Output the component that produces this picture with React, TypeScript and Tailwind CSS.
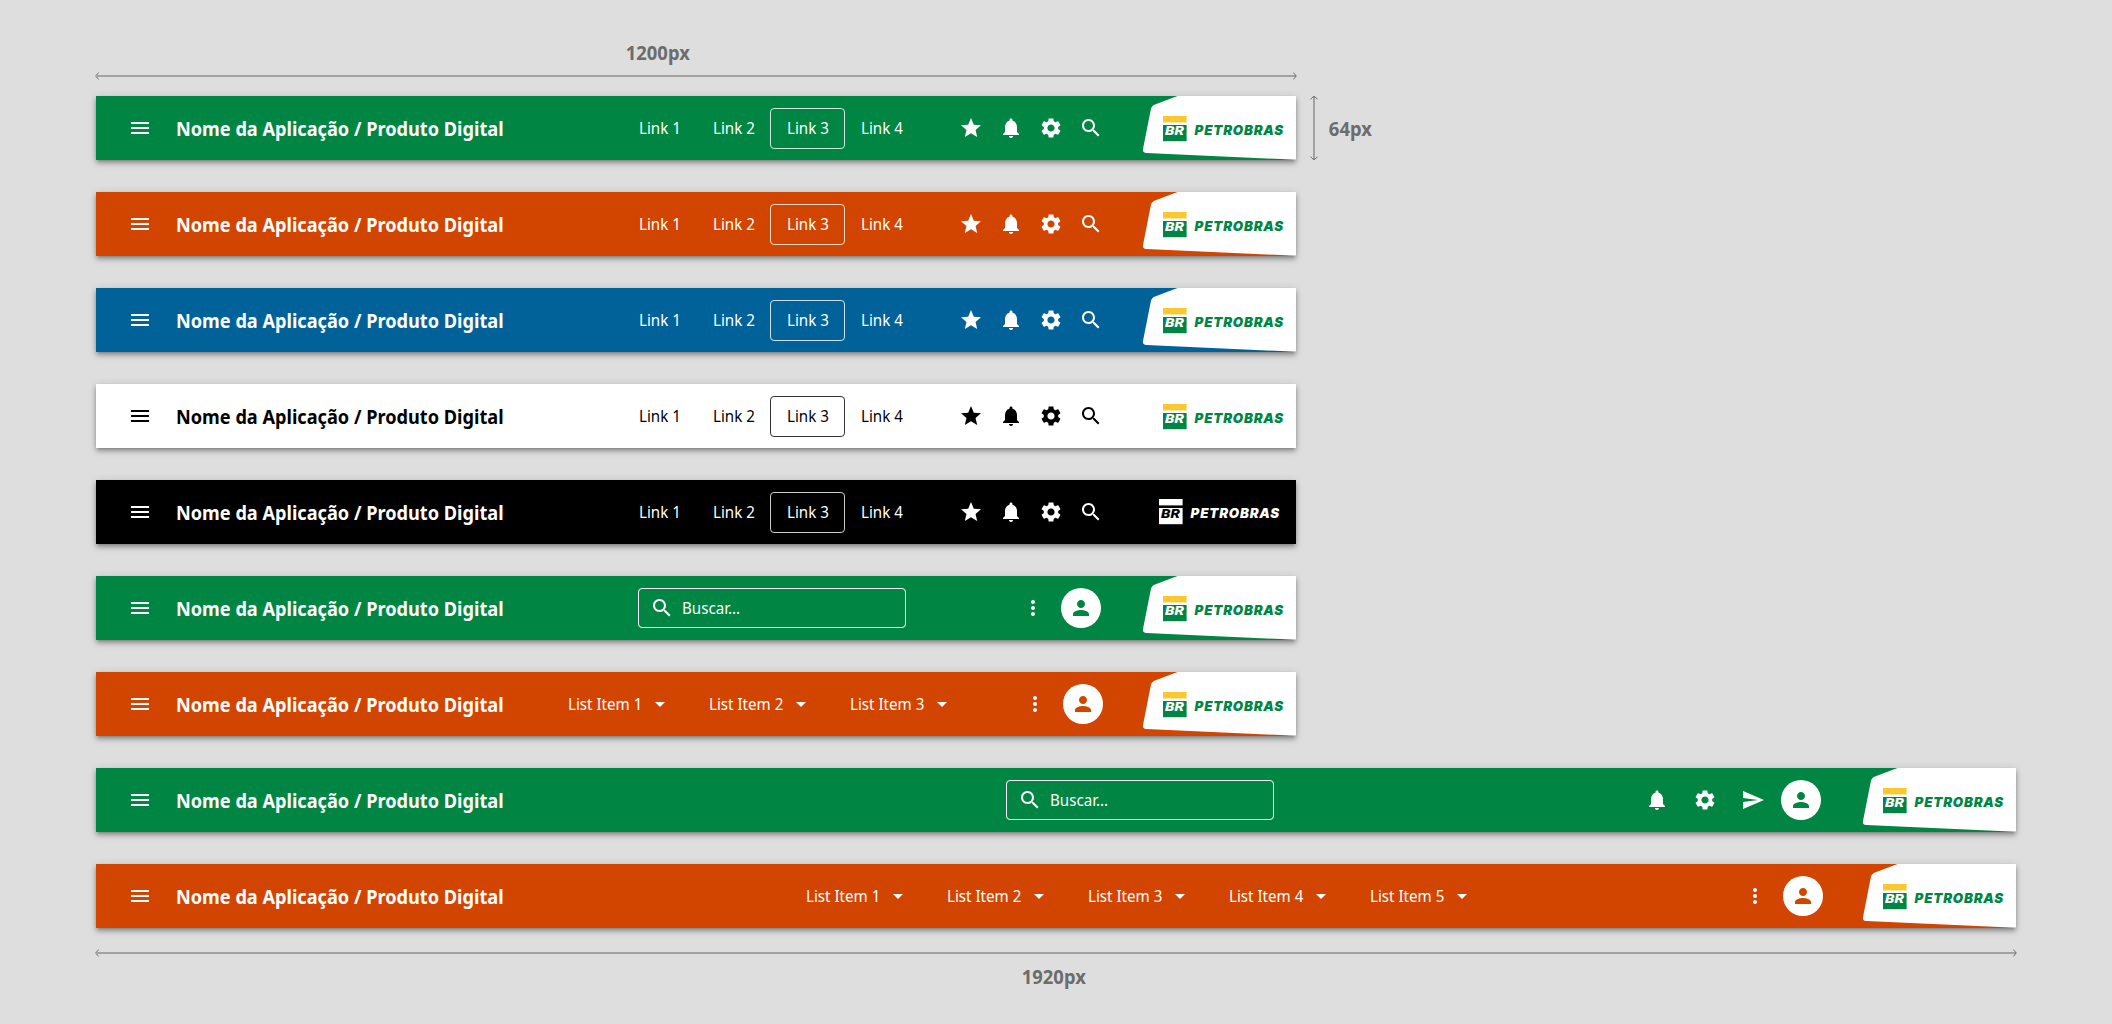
import type { ReactNode } from "react";

const ICONS = {
  menu: "M3 18h18v-2H3v2zm0-5h18v-2H3v2zm0-7v2h18V6H3z",
  star: "M12 17.27L18.18 21l-1.64-7.03L22 9.24l-7.19-.61L12 2 9.19 8.63 2 9.24l5.46 4.73L5.82 21z",
  bell: "M12 22c1.1 0 2-.9 2-2h-4c0 1.1.89 2 2 2zm6-6v-5c0-3.07-1.64-5.64-4.5-6.32V4c0-.83-.67-1.5-1.5-1.5s-1.5.67-1.5 1.5v.68C7.63 5.36 6 7.92 6 11v5l-2 2v1h16v-1l-2-2z",
  gear: "M19.14 12.94c.04-.3.06-.61.06-.94 0-.32-.02-.64-.07-.94l2.03-1.58c.18-.14.23-.41.12-.61l-1.92-3.32c-.12-.22-.37-.29-.59-.22l-2.39.96c-.5-.38-1.03-.7-1.62-.94l-.36-2.54c-.04-.24-.24-.41-.48-.41h-3.84c-.24 0-.43.17-.47.41l-.36 2.54c-.59.24-1.13.57-1.62.94l-2.39-.96c-.22-.08-.47 0-.59.22L2.74 8.87c-.12.21-.08.47.12.61l2.03 1.58c-.05.3-.09.63-.09.94s.02.64.07.94l-2.03 1.58c-.18.14-.23.41-.12.61l1.92 3.32c.12.22.37.29.59.22l2.39-.96c.5.38 1.03.7 1.62.94l.36 2.54c.05.24.24.41.48.41h3.84c.24 0 .44-.17.47-.41l.36-2.54c.59-.24 1.13-.56 1.62-.94l2.39.96c.22.08.47 0 .59-.22l1.92-3.32c.12-.22.07-.47-.12-.61l-2.01-1.58zM12 15.6c-1.98 0-3.6-1.62-3.6-3.6s1.62-3.6 3.6-3.6 3.6 1.62 3.6 3.6-1.62 3.6-3.6 3.6z",
  search: "M15.5 14h-.79l-.28-.27C15.41 12.59 16 11.11 16 9.5 16 5.91 13.09 3 9.5 3S3 5.91 3 9.5 5.91 16 9.5 16c1.61 0 3.09-.59 4.23-1.57l.27.28v.79l5 4.99L20.49 19l-4.99-5zm-6 0C7.01 14 5 11.99 5 9.5S7.01 5 9.5 5 14 7.01 14 9.5 11.99 14 9.5 14z",
  more: "M12 8c1.1 0 2-.9 2-2s-.9-2-2-2-2 .9-2 2 .9 2 2 2zm0 2c-1.1 0-2 .9-2 2s.9 2 2 2 2-.9 2-2-.9-2-2-2zm0 6c-1.1 0-2 .9-2 2s.9 2 2 2 2-.9 2-2-.9-2-2-2z",
  person: "M12 12c2.21 0 4-1.79 4-4s-1.79-4-4-4-4 1.79-4 4 1.79 4 4 4zm0 2c-2.67 0-8 1.34-8 4v2h16v-2c0-2.66-5.33-4-8-4z",
  send: "M2.01 21L23 12 2.01 3 2 10l15 2-15 2z",
  caret: "M7 10l5 5 5-5z",
};

function Icon({ name }: { name: keyof typeof ICONS }) {
  return (
    <svg viewBox="0 0 24 24" className="size-6 shrink-0 fill-current">
      <path d={ICONS[name]} />
    </svg>
  );
}

/* Narrowed label, set a little tighter than the font's natural width. */
function Label({ children }: { children: ReactNode }) {
  return (
    <span className="block origin-left scale-x-[0.945] text-base leading-6 whitespace-nowrap">{children}</span>
  );
}

function Logo({ mono = false }: { mono?: boolean }) {
  const word = mono ? "#ffffff" : "#008542";
  return (
    <svg viewBox="0 0 124 32" className="h-8 w-[124px]" fontFamily="Inter, 'Liberation Sans', sans-serif" fontWeight="900" fontStyle="italic">
      <rect x="0" y="0" width="23.6" height="6.4" fill={mono ? "#ffffff" : "#fdc82f"} />
      <rect x="0" y="9" width="23.6" height="16.2" fill={word} />
      <text x="2" y="18.9" fontSize="13.4" fontFamily="Roboto, sans-serif" textLength="19" lengthAdjust="spacingAndGlyphs" fill={mono ? "#000000" : "#ffffff"}>
        BR
      </text>
      <text x="31.6" y="18.7" fontSize="13.3" textLength="88.6" lengthAdjust="spacing" fill={word}>
        PETROBRAS
      </text>
    </svg>
  );
}

type Brand = "tab" | "plain" | "mono";

function BrandArea({ brand }: { brand: Brand }) {
  return (
    <div className="relative h-16 w-[154px] shrink-0">
      {brand === "tab" && (
        <svg viewBox="0 0 154 64" className="absolute inset-0 h-16 w-[154px] fill-white">
          <path d="M154 0H35.5L13 8.6Q9.5 10 8.8 13.5L1 53Q.2 56.8 4.4 57L154 63.8z" />
        </svg>
      )}
      <div className={brand === "mono" ? "relative pt-[19px] pl-[17px]" : "relative pt-5 pl-[21px]"}>
        <Logo mono={brand === "mono"} />
      </div>
    </div>
  );
}

function Bar({ tone, wide = false, brand = "tab", children }: { tone: string; wide?: boolean; brand?: Brand; children: ReactNode }) {
  return (
    <header
      className={`flex h-16 items-center shadow-[0_2px_4px_-1px_rgba(0,0,0,0.3),0_4px_5px_0_rgba(0,0,0,0.16),0_1px_8px_0_rgba(0,0,0,0.14)] ${wide ? "w-[1920px]" : "w-[1200px]"} ${tone}`}
    >
      <div className="flex w-[420px] shrink-0 items-center gap-6 pl-8">
        <Icon name="menu" />
        <h1 className="mt-px origin-left scale-x-[0.908] text-xl leading-8 font-bold whitespace-nowrap">
          Nome da Aplicação / Produto Digital
        </h1>
      </div>
      <div className="flex flex-1 items-center">{children}</div>
      <BrandArea brand={brand} />
    </header>
  );
}

function Links({ border }: { border: string }) {
  return (
    <>
      <nav className="ml-[106px] flex items-center">
        {[1, 2, 3, 4].map((n) => (
          <a key={n} className={`-mr-px flex h-[41px] w-[75px] items-center justify-start rounded border pl-4 ${n === 3 ? border : "border-transparent"}`}>
            <Label>Link {n}</Label>
          </a>
        ))}
      </nav>
      <div className="ml-[41px] flex gap-4">
        <Icon name="star" />
        <Icon name="bell" />
        <Icon name="gear" />
        <Icon name="search" />
      </div>
    </>
  );
}

function SearchBox() {
  return (
    <div className="flex h-10 w-[268px] items-center gap-2 rounded border border-white pl-[11px]">
      <Icon name="search" />
      <Label>Buscar...</Label>
    </div>
  );
}

function ListItems({ count }: { count: number }) {
  return (
    <nav className="flex">
      {Array.from({ length: count }, (_, i) => (
        <a key={i} className="flex w-[141px] items-center">
          <span className="w-20">
            <Label>List Item {i + 1}</Label>
          </span>
          <Icon name="caret" />
        </a>
      ))}
    </nav>
  );
}

function Avatar({ color }: { color: string }) {
  return (
    <span className={`flex size-10 items-center justify-center rounded-full bg-white ${color}`}>
      <Icon name="person" />
    </span>
  );
}

function Arrow({ width }: { width: string }) {
  return (
    <div className={`flex h-2 items-center text-[#6b6c6b] ${width}`}>
      <svg viewBox="0 0 4 8" className="h-2 w-1 fill-none stroke-current">
        <path d="M3.7 .5L.7 4l3 3.5" />
      </svg>
      <div className="-mx-[3px] h-0.5 flex-1 bg-[#a1a2a1]" />
      <svg viewBox="0 0 4 8" className="h-2 w-1 fill-none stroke-current">
        <path d="M.3 .5L3.3 4l-3 3.5" />
      </svg>
    </div>
  );
}

function Measure({ children }: { children: ReactNode }) {
  return <span className="block scale-x-[0.92] text-xl leading-6 font-bold whitespace-nowrap text-[#6b6c6b]">{children}</span>;
}

const GREEN = "bg-[#008542] text-white";
const ORANGE = "bg-[#d24500] text-white";

export default function App() {
  return (
    <main className="flex h-[1024px] w-[2112px] flex-col bg-[#dedede] px-24 pt-[41px] font-['Noto_Sans',sans-serif]">
      <div className="flex w-[1200px] flex-col items-center">
        <div className="-ml-[77px]">
          <Measure>1200px</Measure>
        </div>
        <div className="mt-[7px]">
          <Arrow width="w-[1202px]" />
        </div>
      </div>
      <div className="mt-4 flex flex-col gap-8">
        <div className="flex items-center">
          <Bar tone={GREEN}>
            <Links border="border-white/80" />
          </Bar>
          <div className="flex items-center pl-[14px]">
            <svg viewBox="0 0 8 66" className="-my-px h-[66px] w-2 fill-none">
              <path d="M4 2V64" stroke="#a1a2a1" strokeWidth="2" />
              <path d="M.5 4.2L4 1.2l3.5 3M.5 61.8L4 64.8l3.5-3" stroke="#6b6c6b" />
            </svg>
            <div className="pt-0.5 pl-[9px]">
              <Measure>64px</Measure>
            </div>
          </div>
        </div>
        <Bar tone={ORANGE}>
          <Links border="border-white/80" />
        </Bar>
        <Bar tone="bg-[#006298] text-white">
          <Links border="border-white/80" />
        </Bar>
        <Bar tone="bg-white text-black" brand="plain">
          <Links border="border-black/80" />
        </Bar>
        <Bar tone="bg-black text-white" brand="mono">
          <Links border="border-white/80" />
        </Bar>
        <Bar tone={GREEN}>
          <div className="ml-[122px] flex items-center">
            <SearchBox />
            <div className="ml-[114.5px] flex items-center gap-4">
              <Icon name="more" />
              <Avatar color="text-[#008542]" />
            </div>
          </div>
        </Bar>
        <Bar tone={ORANGE}>
          <div className="ml-[52px] flex items-center">
            <ListItems count={3} />
            <div className="ml-8 flex items-center gap-4">
              <Icon name="more" />
              <Avatar color="text-[#d24500]" />
            </div>
          </div>
        </Bar>
        <Bar tone={GREEN} wide>
          <div className="ml-[490px] flex items-center">
            <SearchBox />
            <div className="ml-[371px] flex items-center gap-6">
              <Icon name="bell" />
              <Icon name="gear" />
              <Icon name="send" />
            </div>
            <div className="ml-4">
              <Avatar color="text-[#008542]" />
            </div>
          </div>
        </Bar>
        <Bar tone={ORANGE} wide>
          <div className="ml-[290px] flex items-center">
            <ListItems count={5} />
            <div className="ml-[232px] flex items-center gap-4">
              <Icon name="more" />
              <Avatar color="text-[#d24500]" />
            </div>
          </div>
        </Bar>
      </div>
      <div className="mt-[21px] flex w-[1920px] flex-col items-center">
        <Arrow width="w-[1922px]" />
        <div className="mt-[8px] -ml-1">
          <Measure>1920px</Measure>
        </div>
      </div>
    </main>
  );
}
